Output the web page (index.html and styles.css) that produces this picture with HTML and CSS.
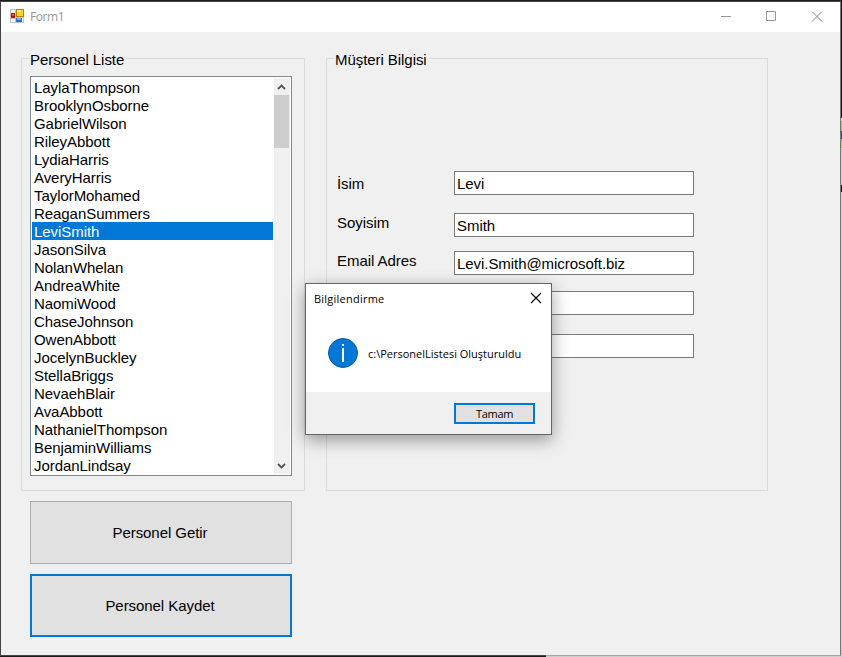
FILE: index.html
```html
<!DOCTYPE html>
<html lang="tr">
<head>
<meta charset="utf-8">
<title>Form1</title>
<link rel="stylesheet" href="styles.css">
</head>
<body>
<main class="window">
  <header class="titlebar">
    <svg class="app-icon" width="14" height="14" viewBox="0 0 14 14" shape-rendering="crispEdges">
      <path fill="#c3c3c3" d="M0 0h14v14H0z"/>
      <path fill="#fff" d="M1 1h4v3H1zM1 10h4v3H1zM12 9h1v4h-1z"/>
      <path fill="#a51d12" d="M1 4h4v5H1z"/><path fill="#e25a4a" d="M2 5h2v2H2z"/>
      <path fill="#b58300" d="M6 0h8v8H6z"/><path fill="#ffd02e" d="M7 1h6v6H7z"/><path fill="#ffe88a" d="M7 1h4v2H7z"/>
      <path fill="#2c6cc9" d="M6 9h6v4H6z"/><path fill="#75adf5" d="M7 9h4v2H7z"/>
    </svg>
    <h1 class="title">Form1</h1>
    <svg class="controls" width="102" height="12" viewBox="0 0 102 12" fill="none" stroke="#999">
      <path d="M0 5.5h10M45.500.5h9v9h-9z"/>
      <path d="M91 .5l10 10M101 .5l-10 10" stroke="#888"/>
    </svg>
  </header>
  <div class="client">
    <div class="left">
      <section class="group list-group">
        <h2 class="legend">Personel Liste</h2>
        <div class="listbox">
          <ul class="items">
            <li>LaylaThompson</li><li>BrooklynOsborne</li><li>GabrielWilson</li><li>RileyAbbott</li>
            <li>LydiaHarris</li><li>AveryHarris</li><li>TaylorMohamed</li><li>ReaganSummers</li>
            <li class="selected">LeviSmith</li><li>JasonSilva</li><li>NolanWhelan</li><li>AndreaWhite</li>
            <li>NaomiWood</li><li>ChaseJohnson</li><li>OwenAbbott</li><li>JocelynBuckley</li>
            <li>StellaBriggs</li><li>NevaehBlair</li><li>AvaAbbott</li><li>NathanielThompson</li>
            <li>BenjaminWilliams</li><li>JordanLindsay</li>
          </ul>
          <div class="scrollbar">
            <svg class="arrow" width="15" height="17" viewBox="0 0 15 17"><path d="M4 11L7.500 7.500l3.500 3.500" fill="none" stroke="#555" stroke-width="1.800"/></svg>
            <div class="thumb"></div>
            <svg class="arrow arrow-down" width="15" height="17" viewBox="0 0 15 17"><path d="M4 7l3.500 3.500L11 7" fill="none" stroke="#555" stroke-width="1.800"/></svg>
          </div>
        </div>
      </section>
      <button class="button">Personel Getir</button>
      <button class="button focused">Personel Kaydet</button>
    </div>
    <section class="group info-group">
      <h2 class="legend">Müşteri Bilgisi</h2>
      <div class="form">
        <div class="labels"><span class="label">İsim</span><span class="label">Soyisim</span><span class="label">Email Adres</span></div>
        <div class="fields">
          <div class="field">Levi</div>
          <div class="field second">Smith</div>
          <div class="field third">Levi.Smith@microsoft.biz</div>
          <div class="field fourth"></div>
          <div class="field fifth"></div>
        </div>
      </div>
    </section>
  </div>
</main>
<aside class="backdrop"></aside>
<div class="backdrop-bottom"></div>
<section class="dialog">
  <header class="dialog-head">
    <h2 class="dialog-title">Bilgilendirme</h2>
    <svg class="dialog-close" width="12" height="12" viewBox="0 0 12 12" stroke="#000" stroke-width="1.100"><path d="M1 1l10 10M11 1L1 11"/></svg>
  </header>
  <div class="dialog-body">
    <svg width="30" height="30" viewBox="0 0 30 30"><circle cx="15" cy="15" r="14.500" fill="#0078d7" stroke="#075a9e"/><path fill="#fff" d="M14 6h2v2h-2zM14 10h2v14h-2z"/></svg>
    <p class="message">c:\PersonelListesi Oluşturuldu</p>
  </div>
  <footer class="dialog-foot"><button class="ok">Tamam</button></footer>
</section>
</body>
</html>
```
FILE: styles.css
```css
* { box-sizing: border-box; margin: 0; padding: 0; }
body {
  position: relative;
  width: 842px;
  height: 657px;
  overflow: hidden;
  padding-top: 1px;
  background: #1d1b1c;
  font: 15px/18px "Liberation Sans", sans-serif;
  letter-spacing: -.06px;
  color: #000;
}
.window {
  width: 841px;
  height: 655px;
  border: 1px solid #444;
  border-right-color: #777;
  background: #f0f0f0;
}
.titlebar {
  display: flex;
  align-items: center;
  height: 30px;
  padding: 0 17px 0 9px;
  background: #fff;
}
.app-icon { margin-top: -2px; }
.title {
  flex: 1;
  margin-left: 6px;
  font: 12px/16px "Open Sans", sans-serif;
  letter-spacing: -.4px;
  color: #999;
}
.client { display: flex; padding: 26px 0 0 20px; }
.left { display: flex; flex-direction: column; width: 284px; }
.group {
  border: 1px solid #dcdcdc;
  height: 433px;
}
.legend {
  width: max-content;
  height: 18px;
  margin: -8px 0 0 7px;
  padding: 0 2px 0 1px;
  background: #f0f0f0;
  font: inherit;
}
.listbox {
  display: flex;
  width: 262px;
  height: 400px;
  margin: 7px 0 0 8px;
  padding: 1px;
  border: 1px solid #828790;
  background: #fff;
}
.items { width: 241px; list-style: none; }
.items li { height: 18px; padding-left: 2px; line-height: 20px; white-space: nowrap; }
.items .selected { background: #0078d7; color: #fff; }
.scrollbar {
  display: flex;
  flex-direction: column;
  width: 16px;
  margin-left: 1px;
  background: #f0f0f0;
}
.thumb { width: 15px; height: 53px; background: #cdcdcd; }
.arrow-down { margin-top: auto; }
.button {
  width: 262px;
  height: 63px;
  margin: 10px 0 0 9px;
  padding-right: 2px;
  border: 1px solid #adadad;
  background: #e1e1e1;
  color: #000;
  font: inherit;
  letter-spacing: inherit;
}
.button.focused { border: 2px solid #0078d7; }
.info-group { width: 442px; margin-left: 21px; }
.form { display: flex; padding: 102px 0 0 10px; }
.labels { display: flex; flex-direction: column; gap: 21px; width: 117px; padding-top: 4px; }
.label { height: 18px; }
.label:last-child { margin-top: -1px; }
.fields { display: flex; flex-direction: column; }
.field {
  width: 240px;
  height: 24px;
  padding: 3px 2px 0;
  border: 1px solid #7a7a7a;
  background: #fff;
}
.second { margin-top: 18px; }
.third { margin-top: 14px; }
.fourth { margin-top: 16px; }
.fifth { margin-top: 19px; }
.backdrop {
  position: absolute;
  left: 841px;
  top: 0;
  width: 1px;
  height: 657px;
  background: linear-gradient(#161616 118px, #ddd 118px 121px, #9c7 121px 131px, #353 131px 139px, #9c7 139px 148px, #ccc 148px 185px, #111 185px 192px, #ccc 192px);
}
.backdrop-bottom {
  position: absolute;
  left: 546px;
  top: 655px;
  width: 296px;
  height: 2px;
  border-top: 1px solid #a5a5a5;
  background: #ccc;
}
.dialog {
  position: absolute;
  left: 305px;
  top: 283px;
  width: 247px;
  height: 152px;
  border: 1px solid #666;
  background: #fff;
  box-shadow: 0 5px 16px rgba(0, 0, 0, .38);
  font: 11px/16px "Open Sans", sans-serif;
  letter-spacing: 0;
}
.dialog-head {
  display: flex;
  justify-content: space-between;
  align-items: center;
  height: 29px;
  padding: 0 9px 0 8px;
}
.dialog-title { font: inherit; letter-spacing: .23px; }
.dialog-close { margin-top: -2px; }
.dialog-body {
  display: flex;
  align-items: center;
  height: 79px;
  padding-left: 22px;
}
.message { margin: 2px 0 0 10px; white-space: nowrap; }
.dialog-foot {
  display: flex;
  justify-content: flex-end;
  height: 42px;
  padding: 11px 16px 0 0;
  background: #f0f0f0;
}
.ok {
  width: 81px;
  height: 21px;
  border: 2px solid #0078d7;
  background: #e1e1e1;
  color: #000;
  font: inherit;
  letter-spacing: -.3px;
}
```
